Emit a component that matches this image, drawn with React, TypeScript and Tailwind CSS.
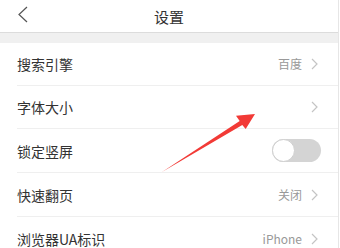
import React from "react";

const font = { fontFamily: '"Noto Sans CJK SC", "Noto Sans", sans-serif' };

function Chevron() {
  return (
    <svg width="7" height="12" viewBox="0 0 7 12" className="ml-[9px]">
      <path d="M1 1 L6 6 L1 11" fill="none" stroke="#c4c4c4" strokeWidth="1.2" />
    </svg>
  );
}

type Row = { label: string; value?: string; chevron?: boolean; toggle?: boolean; h: string };

const rows: Row[] = [
  { label: "搜索引擎", value: "百度", chevron: true, h: "h-[43px]" },
  { label: "字体大小", chevron: true, h: "h-[43px]" },
  { label: "锁定竖屏", toggle: true, h: "h-[44px]" },
  { label: "快速翻页", value: "关闭", chevron: true, h: "h-[44px]" },
  { label: "浏览器UA标识", value: "iPhone", chevron: true, h: "h-[44px]" },
];

export default function App() {
  return (
    <div className="relative w-[340px] h-[248px] overflow-hidden bg-white" style={font}>
      <div className="w-[339px] h-full border-r border-[#e6e6e6]">
        <div className="relative h-[33px] flex items-center justify-center border-b border-[#dcdcdc] bg-white">
          <svg width="12" height="17" viewBox="0 0 12 17" className="absolute left-[17px] top-[6px]">
            <path d="M10 1 L2 8.5 L10 16" fill="none" stroke="#555" strokeWidth="1.2" />
          </svg>
          <span className="text-[15px] text-[#333] leading-none">设置</span>
        </div>
        <div className="h-[10px] bg-[#f0f0f0]" />
        <div className="pl-[17px]">
          {rows.map((r, i) => (
            <div
              key={i}
              className={`${r.h} flex items-center justify-between pr-[20px] border-b border-[#efefef] box-border`}
            >
              <span className="text-[14px] text-[#333] leading-none">{r.label}</span>
              {r.toggle ? (
                <div className="mr-[-3px] w-[49px] h-[23px] rounded-full bg-[#d4d4d4] relative">
                  <div className="absolute left-0 top-0 w-[23px] h-[23px] rounded-full bg-white border border-[#cfcfcf]" />
                </div>
              ) : (
                <div className="flex items-center">
                  {r.value && <span className="text-[12px] text-[#999] leading-none">{r.value}</span>}
                  {r.chevron && <Chevron />}
                </div>
              )}
            </div>
          ))}
        </div>
      </div>
      <svg className="absolute left-0 top-0" width="340" height="248" viewBox="0 0 340 248">
        <polygon
          points="162,172 239.7,121 236,115.7 255,114 245.7,129 242.3,125.1"
          fill="#f23a36"
        />
      </svg>
    </div>
  );
}
